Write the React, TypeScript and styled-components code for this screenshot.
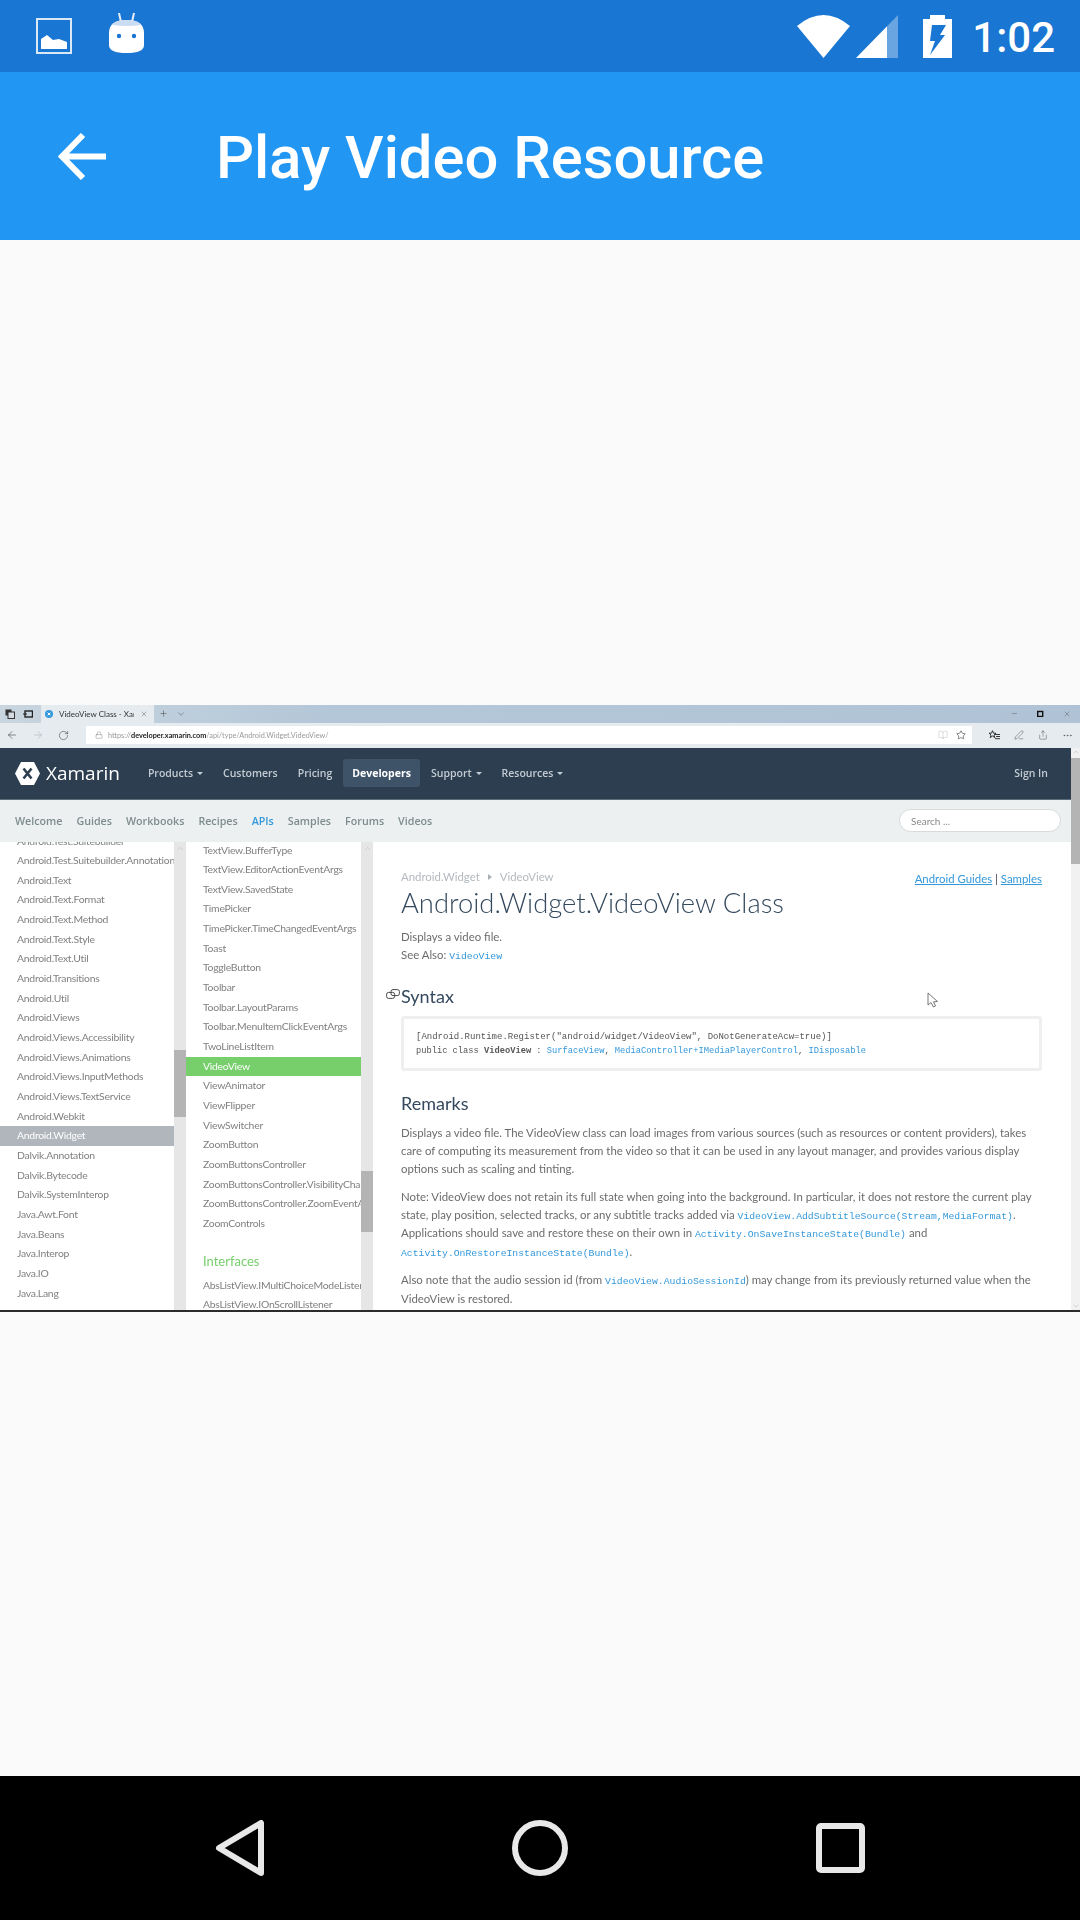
import React from 'react';
import styled, { createGlobalStyle } from 'styled-components';
import {
  ArrowLeft,
  ArrowRight,
  BookOpen,
  ChevronDown,
  ChevronUp,
  Lock,
  Minus,
  MoreHorizontal,
  PenLine,
  Plus,
  RotateCw,
  Share,
  Star,
  X,
} from 'lucide-react';

const LEFT_ITEMS = [
  'Android.Test.Suitebuilder',
  'Android.Test.Suitebuilder.Annotation',
  'Android.Text',
  'Android.Text.Format',
  'Android.Text.Method',
  'Android.Text.Style',
  'Android.Text.Util',
  'Android.Transitions',
  'Android.Util',
  'Android.Views',
  'Android.Views.Accessibility',
  'Android.Views.Animations',
  'Android.Views.InputMethods',
  'Android.Views.TextService',
  'Android.Webkit',
  'Android.Widget',
  'Dalvik.Annotation',
  'Dalvik.Bytecode',
  'Dalvik.SystemInterop',
  'Java.Awt.Font',
  'Java.Beans',
  'Java.Interop',
  'Java.IO',
  'Java.Lang',
];

const MID_ITEMS = [
  'TextView.BufferType',
  'TextView.EditorActionEventArgs',
  'TextView.SavedState',
  'TimePicker',
  'TimePicker.TimeChangedEventArgs',
  'Toast',
  'ToggleButton',
  'Toolbar',
  'Toolbar.LayoutParams',
  'Toolbar.MenuItemClickEventArgs',
  'TwoLineListItem',
  'VideoView',
  'ViewAnimator',
  'ViewFlipper',
  'ViewSwitcher',
  'ZoomButton',
  'ZoomButtonsController',
  'ZoomButtonsController.VisibilityChangeEventArgs',
  'ZoomButtonsController.ZoomEventArgs',
  'ZoomControls',
];

const INTERFACE_ITEMS = ['AbsListView.IMultiChoiceModeListener', 'AbsListView.IOnScrollListener'];

const SITE_NAV = [
  { label: 'Products', caret: true },
  { label: 'Customers' },
  { label: 'Pricing' },
  { label: 'Developers', active: true },
  { label: 'Support', caret: true },
  { label: 'Resources', caret: true },
];

const SUB_NAV = ['Welcome', 'Guides', 'Workbooks', 'Recipes', 'APIs', 'Samples', 'Forums', 'Videos'];

function App() {
  return (
    <Screen>
      <GlobalStyle />
      <StatusBar>
        <svg width="36" height="36" viewBox="0 0 36 36">
          <rect x="1" y="1" width="34" height="34" fill="none" stroke="#d9e7f6" strokeWidth="2" />
          <polygon points="5,31 5,21 11,17 17,22 23,21 31,24 31,31" fill="#fff" />
        </svg>
        <DroidIcon width="35" height="40" viewBox="0 0 35 40">
          <path d="M10 0 L12 9 M25 0 L23 9" stroke="#e6eef8" strokeWidth="2" strokeLinecap="round" />
          <path d="M0 20 Q0 7 17.5 7 Q35 7 35 20 V32 Q35 40 17.5 40 Q0 40 0 32 Z" fill="#fff" />
          <path d="M3 12 Q7 7 17.5 7 Q28 7 32 12 Q17.5 14 3 12 Z" fill="#c9dcf2" />
          <circle cx="10" cy="23" r="2.2" fill="#1976d2" />
          <circle cx="25" cy="23" r="2.2" fill="#1976d2" />
        </DroidIcon>
        <StatusRight>
          <svg width="53" height="43" viewBox="0 0 53 43">
            <path d="M26.5 43 L0 11 Q26.5 -11 53 11 Z" fill="#fff" />
          </svg>
          <svg width="42" height="43" viewBox="0 0 42 43">
            <polygon points="31,11.3 42,0 42,43 31,43" fill="#fff" fillOpacity="0.35" />
            <polygon points="0,43 31,11.3 31,43" fill="#fff" />
          </svg>
          <BatteryIcon width="29" height="43" viewBox="0 0 29 43">
            <path d="M7 0 H22 V4 H29 V43 H0 V4 H7 Z" fill="#fff" />
            <polygon points="9,10 23,10 17,20 22,20 7,40 12,26 7,26" fill="#1976d2" />
          </BatteryIcon>
          <Clock>1:02</Clock>
        </StatusRight>
      </StatusBar>

      <AppBar>
        <svg width="48" height="47" viewBox="0 0 48 47">
          <path d="M4 23.5 H48 M25 2 L4 23.5 L25 45" fill="none" stroke="#fff" strokeWidth="6" />
        </svg>
        <AppTitle>Play Video Resource</AppTitle>
      </AppBar>

      <Content>
        <Shot>
          <TabStrip>
            <StripIcon>
              <svg width="10" height="10" viewBox="0 0 10 10">
                <rect x="0.5" y="0.5" width="6" height="6" fill="#333" />
                <rect x="3" y="3" width="6.5" height="6.5" fill="#d5dce3" stroke="#333" />
              </svg>
            </StripIcon>
            <StripIcon>
              <svg width="10" height="10" viewBox="0 0 10 10">
                <rect x="2" y="2" width="7.5" height="6" fill="none" stroke="#222" strokeWidth="1.4" />
                <path d="M0 5 H4" stroke="#222" />
              </svg>
            </StripIcon>
            <BrowserTab>
              <svg width="8" height="8" viewBox="0 0 8 8">
                <circle cx="4" cy="4" r="4" fill="#3498db" />
                <path d="M2.6 2.6 L5.4 5.4 M5.4 2.6 L2.6 5.4" stroke="#fff" />
              </svg>
              <TabLabel>VideoView Class - Xamarin</TabLabel>
              <X size={8} strokeWidth={1.2} color="#444" />
            </BrowserTab>
            <Plus size={9} strokeWidth={1.2} color="#333" />
            <ChevronDown size={10} strokeWidth={1.1} color="#444" />
            <WindowButtons>
              <Minus size={7} strokeWidth={1.2} color="#333" />
              <svg width="7" height="7" viewBox="0 0 7 7">
                <rect x="0.7" y="1.5" width="5" height="5" fill="none" stroke="#111" strokeWidth="1.4" />
              </svg>
              <X size={8} strokeWidth={1} color="#333" />
            </WindowButtons>
          </TabStrip>

          <ToolStrip>
            <ArrowLeft size={12} strokeWidth={1.1} color="#333" />
            <ArrowRight size={12} strokeWidth={1.1} color="#a6acb2" />
            <RotateCw size={11} strokeWidth={1.1} color="#333" />
            <AddressBar>
              <Lock size={8} strokeWidth={1} color="#555" />
              <Url>
                https://<strong>developer.xamarin.com</strong>/api/type/Android.Widget.VideoView/
              </Url>
              <AddressIcons>
                <BookOpen size={10} strokeWidth={0.9} color="#aaa" />
                <Star size={10} strokeWidth={1.3} color="#222" />
              </AddressIcons>
            </AddressBar>
            <ToolIcons>
              <svg width="11" height="10" viewBox="0 0 11 10">
                <path d="M3.5 0.7 L4.5 3.2 L7 3.2 L5 5 L5.8 7.6 L3.5 6 L1.2 7.6 L2 5 L0 3.2 L2.5 3.2 Z" fill="none" stroke="#222" strokeWidth="0.9" />
                <path d="M6 4.5 H11 M7 6.5 H11 M6 8.7 H11" stroke="#222" strokeWidth="0.9" />
              </svg>
              <PenLine size={10} strokeWidth={1} color="#333" />
              <Share size={10} strokeWidth={1} color="#333" />
              <MoreHorizontal size={11} strokeWidth={1} color="#333" />
            </ToolIcons>
          </ToolStrip>

          <Page>
            <PageMain>
              <SiteHeader>
                <svg width="25" height="23" viewBox="0 0 25 23">
                  <polygon points="6,0 19,0 25,11.5 19,23 6,23 0,11.5" fill="#fff" />
                  <path d="M8.5 6.5 L16.5 16.5 M16.5 6.5 L8.5 16.5" stroke="#2d3e50" strokeWidth="2.6" />
                </svg>
                <Brand>Xamarin</Brand>
                <SiteNav>
                  {SITE_NAV.map((item) => (
                    <SiteNavItem key={item.label} $active={item.active}>
                      {item.label}
                      {item.caret && <Caret />}
                    </SiteNavItem>
                  ))}
                </SiteNav>
                <SignIn>Sign In</SignIn>
              </SiteHeader>

              <SubNav>
                {SUB_NAV.map((label) => (
                  <SubNavItem key={label} $active={label === 'APIs'}>
                    {label}
                  </SubNavItem>
                ))}
                <SearchBox>Search ...</SearchBox>
              </SubNav>

              <Columns>
                <NavColumn $wide={false} $offset={-10}>
                  {LEFT_ITEMS.map((item) => (
                    <NavRow key={item} $selected={item === 'Android.Widget'} $color="#b1b6bd">
                      {item}
                    </NavRow>
                  ))}
                </NavColumn>
                <ListScroll $thumbTop={208} $thumbHeight={67}>
                  <ChevronUp size={9} strokeWidth={1} color="#aaa" />
                </ListScroll>
                <NavColumn $wide $offset={-1}>
                  {MID_ITEMS.map((item) => (
                    <NavRow key={item} $selected={item === 'VideoView'} $color="#76cf6b">
                      {item}
                    </NavRow>
                  ))}
                  <GroupTitle>Interfaces</GroupTitle>
                  {INTERFACE_ITEMS.map((item) => (
                    <NavRow key={item}>{item}</NavRow>
                  ))}
                </NavColumn>
                <ListScroll $thumbTop={329} $thumbHeight={61}>
                  <ChevronUp size={9} strokeWidth={1} color="#aaa" />
                </ListScroll>

                <Article>
                  <TopRow>
                    <Crumbs>
                      Android.Widget
                      <CrumbArrow />
                      VideoView
                    </Crumbs>
                    <TopLinks>
                      <u>Android Guides</u> <b>|</b> <u>Samples</u>
                    </TopLinks>
                  </TopRow>
                  <ClassTitle>Android.Widget.VideoView Class</ClassTitle>
                  <Summary>Displays a video file.</Summary>
                  <SeeAlso>
                    See Also: <InlineCode>VideoView</InlineCode>
                  </SeeAlso>
                  <SectionTitle $gap={18}>
                    <LinkMark width="14" height="10" viewBox="0 0 14 10">
                      <rect x="0.6" y="3.4" width="8" height="6" rx="2" fill="none" stroke="#444" />
                      <rect x="5" y="0.6" width="8.4" height="6" rx="2" fill="none" stroke="#444" />
                    </LinkMark>
                    Syntax
                  </SectionTitle>
                  <CodeBox>
                    <CodeLine $size={9}>[Android.Runtime.Register("android/widget/VideoView", DoNotGenerateAcw=true)]</CodeLine>
                    <CodeLine $size={8.72}>
                      public class <b>VideoView</b> : <CodeLink>SurfaceView</CodeLink>,{' '}
                      <CodeLink>MediaController+IMediaPlayerControl</CodeLink>, <CodeLink>IDisposable</CodeLink>
                    </CodeLine>
                  </CodeBox>
                  <SectionTitle $gap={19}>Remarks</SectionTitle>
                  <Para $gap={8}>
                    <TextLine>
                      Displays a video file. The VideoView class can load images from various sources (such as resources or content providers), takes
                    </TextLine>
                    <TextLine>
                      care of computing its measurement from the video so that it can be used in any layout manager, and provides various display
                    </TextLine>
                    <TextLine>options such as scaling and tinting.</TextLine>
                  </Para>
                  <Para $gap={9}>
                    <TextLine>
                      Note: VideoView does not retain its full state when going into the background. In particular, it does not restore the current play
                    </TextLine>
                    <TextLine>
                      state, play position, selected tracks, or any subtitle tracks added via{' '}
                      <InlineCode>VideoView.AddSubtitleSource(Stream,MediaFormat)</InlineCode>.
                    </TextLine>
                    <TextLine>
                      Applications should save and restore these on their own in{' '}
                      <InlineCode>Activity.OnSaveInstanceState(Bundle)</InlineCode> and
                    </TextLine>
                    <TextLine>
                      <InlineCode>Activity.OnRestoreInstanceState(Bundle)</InlineCode>.
                    </TextLine>
                  </Para>
                  <Para $gap={10}>
                    <TextLine>
                      Also note that the audio session id (from <InlineCode>VideoView.AudioSessionId</InlineCode>) may change from its previously returned value when the
                    </TextLine>
                    <TextLine>VideoView is restored.</TextLine>
                  </Para>
                  <Pointer width="12" height="16" viewBox="0 0 12 16">
                    <path d="M1 1 V13 L4 10.5 L6.5 15 L8.5 14 L6.5 9.8 L10.5 9.5 Z" fill="#fff" stroke="#555" strokeWidth="0.8" />
                  </Pointer>
                </Article>
              </Columns>
            </PageMain>
            <PageScroll>
              <ChevronUp size={8} strokeWidth={1} color="#999" />
              <PageThumb />
              <ChevronDown size={8} strokeWidth={1} color="#999" />
            </PageScroll>
          </Page>
        </Shot>
      </Content>

      <NavBar>
        <svg width="49" height="56" viewBox="0 0 49 56">
          <path d="M46 3 V53 L4 28 Z" fill="none" stroke="#e8e8e8" strokeWidth="6" strokeLinejoin="round" />
        </svg>
        <svg width="56" height="56" viewBox="0 0 56 56">
          <circle cx="28" cy="28" r="25" fill="none" stroke="#e8e8e8" strokeWidth="6" />
        </svg>
        <svg width="49" height="50" viewBox="0 0 49 50">
          <rect x="3" y="3" width="43" height="44" rx="2" fill="none" stroke="#e8e8e8" strokeWidth="6" />
        </svg>
      </NavBar>
    </Screen>
  );
}

const GlobalStyle = createGlobalStyle`
  html, body {
    margin: 0;
    padding: 0;
    background: #fafafa;
  }
`;

const Screen = styled.div`
  width: 1080px;
  height: 1920px;
  display: flex;
  flex-direction: column;
  overflow: hidden;
  font-family: Roboto, sans-serif;
`;

const StatusBar = styled.div`
  height: 72px;
  flex: none;
  padding: 0 25px 0 36px;
  box-sizing: border-box;
  display: flex;
  align-items: center;
  gap: 37px;
  background: #1976d2;
`;

const DroidIcon = styled.svg`
  margin-top: -6px;
  height: 40px;
`;

const StatusRight = styled.div`
  margin-left: auto;
  display: flex;
  align-items: center;
  gap: 6px;
`;

const BatteryIcon = styled.svg`
  margin: 0 14px 0 19px;
`;

const Clock = styled.span`
  color: #fff;
  font-size: 42px;
  font-weight: 500;
  line-height: 43px;
  margin-top: 2px;
`;

const AppBar = styled.header`
  height: 168px;
  flex: none;
  padding-left: 58px;
  box-sizing: border-box;
  display: flex;
  align-items: center;
  gap: 110px;
  background: #2196f3;
`;

const AppTitle = styled.h1`
  margin: 4px 0 0;
  color: #fff;
  font-size: 59.7px;
  font-weight: 500;
`;

const Content = styled.main`
  flex: 1;
  display: flex;
  align-items: center;
  background: #fafafa;
`;

const Shot = styled.div`
  width: 1080px;
  height: 607px;
  box-sizing: border-box;
  display: flex;
  flex-direction: column;
  overflow: hidden;
  background: #fff;
  border-bottom: 2px solid #2b2b2b;
  font-family: Lato, 'Open Sans', sans-serif;
  color: #666;
  filter: blur(0.4px);
`;

const TabStrip = styled.div`
  height: 18px;
  flex: none;
  display: flex;
  align-items: center;
  gap: 8px;
  padding-left: 5px;
  background: linear-gradient(90deg, #c9d5df, #b4c7d8 30%, #b0c3d6);
`;

const StripIcon = styled.span`
  width: 10px;
  height: 10px;
  display: flex;
`;

const BrowserTab = styled.div`
  width: 113px;
  height: 18px;
  margin-right: -3px;
  padding: 0 6px 0 4px;
  box-sizing: border-box;
  display: flex;
  align-items: center;
  gap: 6px;
  background: #e6ebf0;
`;

const TabLabel = styled.span`
  flex: 1;
  overflow: hidden;
  white-space: nowrap;
  font-size: 8px;
  color: #333;
`;

const WindowButtons = styled.div`
  margin-left: auto;
  display: flex;
  align-items: center;
  gap: 19px;
  padding-right: 9px;
`;

const ToolStrip = styled.div`
  height: 25px;
  flex: none;
  display: flex;
  align-items: center;
  gap: 14px;
  padding-left: 6px;
  background: #e6ebf0;
`;

const AddressBar = styled.div`
  width: 886px;
  height: 18px;
  margin-left: 3px;
  box-sizing: border-box;
  display: flex;
  align-items: center;
  gap: 5px;
  padding: 0 6px 0 9px;
  background: #fff;
`;

const Url = styled.span`
  font-size: 7.3px;
  color: #999;
  white-space: nowrap;

  strong {
    color: #222;
    font-weight: 700;
  }
`;

const AddressIcons = styled.span`
  margin-left: auto;
  display: flex;
  align-items: center;
  gap: 8px;
`;

const ToolIcons = styled.span`
  display: flex;
  align-items: center;
  gap: 14px;
  margin-left: 3px;
`;

const Page = styled.div`
  flex: 1;
  min-height: 0;
  display: flex;
`;

const PageMain = styled.div`
  width: 1071px;
  flex: none;
  display: flex;
  flex-direction: column;
`;

const SiteHeader = styled.div`
  height: 52px;
  flex: none;
  box-sizing: border-box;
  display: flex;
  align-items: center;
  padding: 0 23px 0 15px;
  background: #2d3e50;
  border-bottom: 1px solid #5d6b79;
`;

const Brand = styled.span`
  margin-left: 6px;
  color: #fff;
  font-size: 19px;
  font-family: 'Open Sans', sans-serif;
`;

const SiteNav = styled.nav`
  margin-left: 19px;
  display: flex;
  align-items: center;
  gap: 2px;
`;

const SiteNavItem = styled.span<{ $active?: boolean }>`
  height: 28px;
  padding: 0 9px;
  display: flex;
  align-items: center;
  gap: 4px;
  border-radius: 3px;
  color: ${(p) => (p.$active ? '#fff' : '#c3cbd3')};
  background: ${(p) => (p.$active ? '#3e5368' : 'transparent')};
  font-size: 10.5px;
  font-weight: ${(p) => (p.$active ? 700 : 600)};
  font-family: 'Open Sans', sans-serif;
`;

const Caret = styled.i`
  width: 0;
  height: 0;
  border-left: 3px solid transparent;
  border-right: 3px solid transparent;
  border-top: 3px solid #c3cbd3;
`;

const SignIn = styled.span`
  margin-left: auto;
  color: #c3cbd3;
  font-size: 10.5px;
  font-weight: 600;
  font-family: 'Open Sans', sans-serif;
`;

const SubNav = styled.div`
  height: 42px;
  flex: none;
  box-sizing: border-box;
  display: flex;
  align-items: center;
  gap: 14px;
  padding: 0 10px 0 15px;
  background: #ecf0f1;
`;

const SubNavItem = styled.span<{ $active?: boolean }>`
  color: ${(p) => (p.$active ? '#3498db' : '#7f8c8d')};
  font-size: 10.7px;
  font-weight: 600;
  font-family: 'Open Sans', sans-serif;
`;

const SearchBox = styled.div`
  width: 162px;
  height: 23px;
  margin-left: auto;
  box-sizing: border-box;
  display: flex;
  align-items: center;
  padding-left: 11px;
  background: #fff;
  border: 1px solid #d8dadc;
  border-radius: 12px;
  color: #888;
  font-size: 10px;
`;

const Columns = styled.div`
  flex: 1;
  min-height: 0;
  display: flex;
  overflow: hidden;
`;

const NavColumn = styled.div<{ $wide: boolean; $offset: number }>`
  width: ${(p) => (p.$wide ? 175 : 174)}px;
  flex: none;
  margin-top: ${(p) => p.$offset}px;
  overflow: hidden;
`;

const NavRow = styled.div<{ $selected?: boolean; $color?: string }>`
  height: 19.67px;
  line-height: 19.67px;
  padding-left: 17px;
  white-space: nowrap;
  overflow: hidden;
  font-size: 10.4px;
  letter-spacing: -0.25px;
  color: ${(p) => (p.$selected ? '#fff' : '#808080')};
  background: ${(p) => (p.$selected ? p.$color : 'transparent')};
`;

const GroupTitle = styled.div`
  margin: 18px 0 5px 17px;
  height: 19px;
  line-height: 19px;
  color: #76cf6b;
  font-size: 13px;
`;

const ListScroll = styled.div<{ $thumbTop: number; $thumbHeight: number }>`
  position: relative;
  width: 12px;
  flex: none;
  display: flex;
  justify-content: center;
  padding-top: 2px;
  box-sizing: border-box;
  background: #e6e6e6;

  &::after {
    content: '';
    position: absolute;
    left: 0;
    right: 0;
    top: ${(p) => p.$thumbTop}px;
    height: ${(p) => p.$thumbHeight}px;
    background: #b4b4b4;
  }
`;

const Article = styled.article`
  position: relative;
  flex: 1;
  min-width: 0;
  padding: 26px 29px 0 28px;
  font-size: 11.4px;
  color: #6c6c6c;
`;

const TopRow = styled.div`
  height: 18px;
  display: flex;
  align-items: center;
  justify-content: space-between;
`;

const Crumbs = styled.div`
  display: flex;
  align-items: center;
  color: #b3b9bf;
`;

const CrumbArrow = styled.i`
  width: 0;
  height: 0;
  margin: 0 8px;
  border-top: 3px solid transparent;
  border-bottom: 3px solid transparent;
  border-left: 4px solid #aab0b6;
`;

const TopLinks = styled.div`
  margin-top: 4px;
  color: #3498db;

  b {
    color: #445;
    font-weight: 400;
  }
`;

const ClassTitle = styled.h2`
  margin: 0;
  height: 34px;
  line-height: 34px;
  color: #34495e;
  font-size: 27.4px;
  font-weight: 300;
  white-space: nowrap;
`;

const Summary = styled.p`
  margin: 8px 0 0;
  line-height: 18px;
`;

const SeeAlso = styled.p`
  margin: 0;
  line-height: 17px;
`;

const InlineCode = styled.code`
  font-family: 'Liberation Mono', monospace;
  font-size: 9.77px;
  color: #3498db;
`;

const SectionTitle = styled.h3<{ $gap: number }>`
  margin: ${(p) => p.$gap}px 0 0;
  height: 26px;
  line-height: 26px;
  display: flex;
  align-items: center;
  color: #34495e;
  font-size: 18px;
  font-weight: 400;
`;

const LinkMark = styled.svg`
  margin-left: -15px;
  margin-right: 1px;
  margin-top: -4px;
`;

const CodeBox = styled.div`
  margin-top: 7px;
  height: 55px;
  box-sizing: border-box;
  padding: 11px 12px 0;
  border: 3px solid #efefef;
  border-radius: 3px;
`;

const CodeLine = styled.div<{ $size: number }>`
  height: 14px;
  line-height: 14px;
  white-space: nowrap;
  font-family: 'Liberation Mono', monospace;
  font-size: ${(p) => p.$size}px;
  color: #555;
`;

const CodeLink = styled.span`
  color: #3498db;
`;

const Para = styled.div<{ $gap: number }>`
  margin-top: ${(p) => p.$gap}px;
`;

const TextLine = styled.div`
  height: 18.4px;
  line-height: 18.4px;
  white-space: nowrap;
`;

const Pointer = styled.svg`
  position: absolute;
  left: 554px;
  top: 150px;
`;

const PageScroll = styled.div`
  position: relative;
  width: 9px;
  flex: none;
  display: flex;
  flex-direction: column;
  align-items: center;
  justify-content: space-between;
  background: #f1f1f1;
`;

const PageThumb = styled.div`
  position: absolute;
  left: 0;
  right: 0;
  top: 10px;
  height: 106px;
  background: #b4b4b4;
`;

const NavBar = styled.nav`
  height: 144px;
  flex: none;
  box-sizing: border-box;
  padding-left: 215px;
  display: flex;
  align-items: center;
  gap: 248px;
  background: #000;
`;

export default App;
